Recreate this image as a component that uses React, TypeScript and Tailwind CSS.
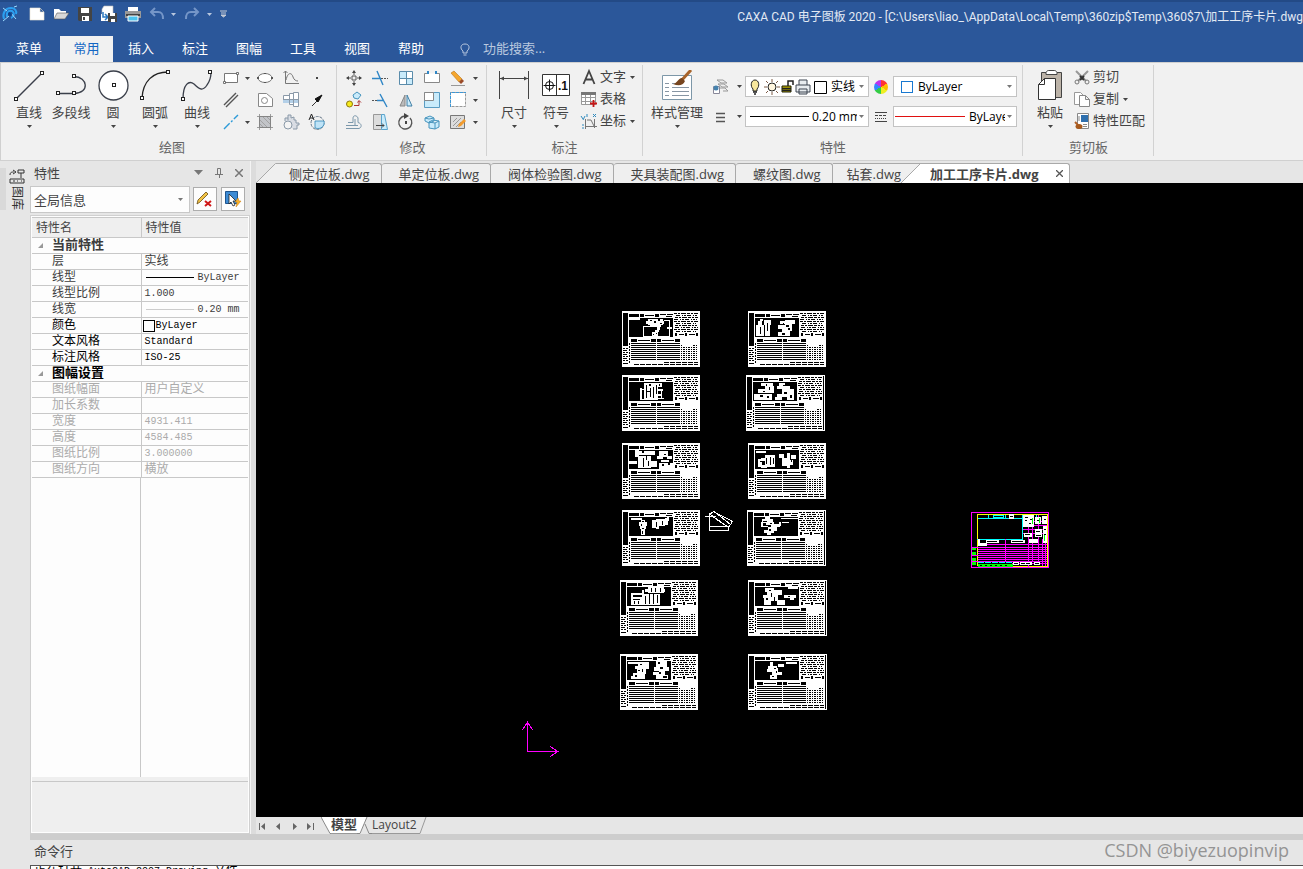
import React from 'react';

interface IconProps {
    size?: number;
    children: React.ReactNode;
}

const Icon: React.FC<IconProps> = ({ size = 18, children }) => (
    <svg width={size} height={size} viewBox={`0 0 ${size} ${size}`} fill="none" stroke="#444" className="shrink-0" aria-hidden="true">
        {children}
    </svg>
);

const Caret: React.FC<{ className?: string }> = ({ className = 'text-[#444]' }) => (
    <svg width="5" height="3" viewBox="0 0 5 3" className={`shrink-0 ${className}`} aria-hidden="true">
        <path d="M0 0h5L2.500 3z" fill="currentColor" />
    </svg>
);

const menuTabs = ['插入', '标注', '图幅', '工具', '视图', '帮助'];
const docTabs = ['单定位板.dwg', '阀体检验图.dwg', '夹具装配图.dwg', '螺纹图.dwg'];

const quickIcons: { label: string; icon: React.ReactNode }[] = [
    { label: '新建', icon: <path d="M2 3h10l4 4v8H2z M12 3v4h4" fill="#fff" stroke="#e8e0d0" strokeWidth=".6" /> },
    { label: '打开', icon: <><path d="M2 14V4h5l2 2h5v3" fill="#fff" stroke="none" /><path d="M2 14l3-6h12l-4 6z" fill="#d8d8d8" stroke="#555" strokeWidth=".6" /></> },
    { label: '保存', icon: <><path d="M2 2h14v14H3l-1-1z" fill="#444" stroke="none" /><path d="M5 3h8v5H5zM6 11h7v5H6z" fill="#fff" stroke="none" /><path d="M8 12v3" stroke="#444" strokeWidth="2" /></> },
    { label: '另存为', icon: <><path d="M4 1h9v9H2V4z" fill="#fff" stroke="#bbb" strokeWidth=".6" /><path d="M1 9v7h8v-6" fill="#fff" stroke="none" /><path d="M3 7v5h4M5 9l3 3-3 3" stroke="#2b78c0" strokeWidth="1.500" /><path d="M8 8h9v9H8z" fill="#444" stroke="none" /><path d="M10 8h5v3h-5zM11 14h4v3h-4z" fill="#fff" stroke="none" /></> },
    { label: '打印', icon: <><path d="M4 2h10v5H4z" fill="#fff" stroke="none" /><path d="M1 6h16v7H1z" fill="#999" stroke="none" /><path d="M2 10h14" stroke="#444" strokeWidth="2" /><path d="M4 11h10v5H4z" fill="#4cc3ee" stroke="#fff" /></> },
];

const undoIcon = <path d="M7 3L3 7l4 4M3 7h7c4 0 5 2 5 7" stroke="#7596c8" strokeWidth="2" />;
const redoIcon = <path d="M11 3l4 4-4 4M15 7H8c-4 0-5 2-5 7" stroke="#7596c8" strokeWidth="2" />;

const node = (x: number, y: number) => <rect x={x - 1.5} y={y - 1.5} width="3" height="3" fill="#fff" stroke="#222" />;

const drawTools: { label: string; caret: boolean; icon: React.ReactNode }[] = [
    { label: '直线', caret: true, icon: <><path d="M3.500 28.500l26-26" stroke="#3a3f4a" strokeWidth="1.500" />{node(3, 29)}{node(29, 3)}</> },
    { label: '多段线', caret: false, icon: <><path d="M3 23.500h16c16 0 14-17 0-17" stroke="#3a3f4a" strokeWidth="1.300" />{node(3, 23)}{node(19, 23)}{node(19, 6)}</> },
    { label: '圆', caret: true, icon: <><circle cx="16.500" cy="15.500" r="14.500" fill="#fff" stroke="#3a3f4a" strokeWidth="1.300" />{node(17, 15)}</> },
    { label: '圆弧', caret: true, icon: <><path d="M3 28C4 11 14 2 29 2" stroke="#222" strokeWidth="1.300" />{node(3, 28)}{node(29, 2)}</> },
    { label: '曲线', caret: true, icon: <><path d="M2 29C2 14 8 10 13 14c6 6 9 7 13 1 3-4 4-7 4-13" stroke="#3a3f4a" strokeWidth="1.300" />{node(2, 29)}{node(29, 2)}</> },
];

const drawGrid: { label: string; caret?: boolean; icon: React.ReactNode }[] = [
    { label: '矩形', caret: true, icon: <><path d="M2.500 4.500h13v9h-13z" fill="#fff" stroke="#777" /><path d="M1.500 12.500h2v2h-2zM14.500 3.500h2v2h-2z" fill="#fff" stroke="#555" strokeWidth=".8" /></> },
    { label: '椭圆', icon: <><ellipse cx="9" cy="9" rx="7" ry="4.500" fill="#fff" stroke="#777" /><path d="M1 8h2v2H1zM15 8h2v2h-2zM8 4h2v1H8zM8 13h2v1H8z" fill="#555" stroke="none" /></> },
    { label: '公式曲线', icon: <path d="M3.500 2v12.500H17M1.500 4l2-2 2 2M4 11c2-9 6-7 7-3 1 3 3 4 5 4" stroke="#777" /> },
    { label: '点', icon: <path d="M8 8h2v2H8z" fill="#444" stroke="none" /> },
    { label: '平行线', icon: <path d="M2 14L14 2M4 16L16 4" stroke="#555" strokeWidth="1.400" /> },
    { label: '局部放大', icon: <><path d="M2.500 2.500h8l6 5v8h-14z" fill="#fff" stroke="#888" /><circle cx="8.500" cy="9.500" r="3" stroke="#888" /></> },
    { label: '轴', icon: <><path d="M1.500 4.500h6v-2h4v-1h5v14h-5v-2h-4v-2h-6z" fill="#fff" stroke="#8a99a8" /><path d="M1 8h15v4H1z" fill="#b4d0e8" stroke="none" /><path d="M1 8.500h15M7.500 3v10M11.500 2v13" stroke="#8a99a8" /></> },
    { label: '箭头', icon: <><path d="M4 15l6-6" stroke="#333" /><path d="M14 4L7 8l3 3z" fill="#111" stroke="#111" /></> },
    { label: '中心线', caret: true, icon: <path d="M2 16L16 2" stroke="#2d9bd8" strokeWidth="1.400" strokeDasharray="8 2 2 2" /> },
    { label: '填充', icon: <><path d="M3.500 3.500h11v11h-11z" fill="#c2c4c8" stroke="#777" /><path d="M4 7l7 7M4 11l3 3M7 4l7 7M11 4l3 3" stroke="#999" strokeWidth=".8" /><path d="M1 3.500h16M1 14.500h16M3.500 1v16M14.500 1v16" stroke="#888" strokeWidth=".8" /></> },
    { label: '齿轮', icon: <><path d="M3 8V5h3V2h3v3l3-1v3h2v3h3v2h-2v4h-4M6 5v2" stroke="#8a99a8" fill="#d9dde4" /><circle cx="6" cy="12" r="4" fill="#f4f4f4" stroke="#8a99a8" /></> },
    { label: '块属性', icon: <><circle cx="9.500" cy="10" r="6.500" stroke="#678" strokeDasharray="3 1" /><path d="M7 8h9c1 5-3 9-9 7z" fill="#bfe3f7" stroke="#2d86b8" strokeWidth=".8" /><path d="M1 7l2.500-6L6 7M2 5h3" stroke="#222" /></> },
];

const editGrid: { label: string; icon: React.ReactNode }[] = [
    { label: '平移', icon: <><path d="M9 2v14M2 9h14" stroke="#555" strokeDasharray="4 1" /><path d="M7 4l2-3 2 3zM7 14l2 3 2-3zM4 7L1 9l3 2zM14 7l3 2-3 2z" fill="#444" stroke="none" /><path d="M7 7h4v4H7z" fill="#eee" stroke="#555" /></> },
    { label: '裁剪', icon: <><path d="M10 9.500h7" stroke="#555" strokeDasharray="2 1" /><path d="M1 9.500h9M6 2l6 14" stroke="#2f86c6" strokeWidth="1.400" /></> },
    { label: '阵列', icon: <><path d="M2.500 2.500h13v13h-13z" fill="#c9ebfb" stroke="#5a8cab" /><path d="M9 3h6v6H9zM3 10h6v5H3z" fill="#fff" stroke="none" /><path d="M9.500 2v14M2 9.500h14" stroke="#5a8cab" /></> },
    { label: '打断', icon: <><path d="M5 4.500H1.500v9h15v-9H14" fill="#fff" stroke="#888" /><path d="M4 2h2v3H4zM12 2h2v3h-2z" fill="#2f86c6" stroke="none" /></> },
    { label: '删除', icon: <><path d="M2 4l3-2 8 8-3 3z" fill="#f5a62d" stroke="#b8741a" strokeWidth=".6" /><path d="M10 13l3-3 2 2-3 3z" fill="#9b4a28" stroke="none" /><path d="M2 16.500h14" stroke="#999" /></> },
    { label: '复制', icon: <><path d="M8 4l4-3 4 3-3 4-4-1z" fill="#c9ebfb" stroke="#4794bd" /><circle cx="4.500" cy="13" r="3" fill="#f6ea1c" stroke="#8c780e" /><path d="M9 14.500h5V10M12.500 11.500l1.500-2 2 2" stroke="#a33" /></> },
    { label: '延伸', icon: <><path d="M1 9.500h5" stroke="#555" strokeDasharray="2 1" /><path d="M9 3l7 13M6 9.500h7" stroke="#2f86c6" strokeWidth="1.400" /></> },
    { label: '镜像', icon: <><path d="M8 4v11H3z" fill="#bbb" stroke="#888" /><path d="M10 4v11h5z" fill="#c9ebfb" stroke="#417fa5" /></> },
    { label: '缩放', icon: <><path d="M1.500 1.500h15v15h-15z" fill="#c9ebfb" stroke="#5a9cc2" /><path d="M1.500 1.500h9v8h-9z" fill="#fff" stroke="#888" /></> },
    { label: '拉伸', icon: <><path d="M1.500 1.500h15v14h-15z" fill="#fff" stroke="#999" strokeDasharray="3 1" /><path d="M1.500 16V1.500H17" stroke="#3c97d6" strokeDasharray="3 1" /></> },
    { label: '等距线', icon: <path d="M1 15.500h13c3-1 3-5-1-6V5c-1-3-5-3-5 0v4.500H3M1 12.500h9V6M5 12.500h8" stroke="#7c98ab" /> },
    { label: '倒角', icon: <><path d="M2.500 1.500h8v15h-8z" fill="#ddd" stroke="#999" /><path d="M10.500 1.500h3l3 15h-6z" fill="#c9ebfb" stroke="#5aa4cd" /><path d="M5 12.500h8M11 10.500l2 2-2 2" stroke="#444" /></> },
    { label: '旋转', icon: <><path d="M8 3a6.500 6.500 0 1 0 5 2" stroke="#555" strokeWidth="1.400" /><path d="M7 0l5 3-5 3z" fill="#444" stroke="none" /><path d="M8 8h2v3H8z" fill="#444" stroke="none" /></> },
    { label: '分解', icon: <path d="M2 5l5-2 4 2v3l-5 2-4-2zM6 9l4-2 6 1v6l-4 2-6-1zM6 9l6 1 4-2M12 10v6M2 5l4 1 5-1" fill="#c9ebfb" stroke="#4794bd" /> },
    { label: '填充编辑', icon: <><path d="M1.500 2.500h14v13h-14z" fill="#ddd" stroke="#777" /><path d="M4 9l4-4M4 13l8-8M7 14l5-5" stroke="#999" /><path d="M9 14l1-3 5-5 2 2-5 5z" fill="#f29b2d" stroke="none" /></> },
];

const RibbonGroup: React.FC<{ label: string; className: string; children: React.ReactNode }> = ({ label, className, children }) => (
    <section aria-label={label} className={`mt-0.5 mb-1 shrink-0 flex flex-col border-r border-[#d2d2d2] ${className}`}>
        <div className="flex h-[72px]">{children}</div>
        <h2 className="text-center text-[13px] leading-[18px] text-[#666] mt-0.5">{label}</h2>
    </section>
);

const BigButton: React.FC<{ label: string; caret?: boolean; wide?: boolean; children: React.ReactNode }> = ({ label, caret = true, wide, children }) => (
    <button type="button" className={`flex flex-col items-center pt-[5px] shrink-0 ${wide ? 'w-[60px]' : 'w-[42px]'}`}>
        <Icon size={32}>{children}</Icon>
        <span className="text-[13px] leading-5 whitespace-nowrap">{label}</span>
        {caret && <Caret className="text-[#444] mt-[3px]" />}
    </button>
);

const TextButton: React.FC<{ label: string; caret?: boolean; children: React.ReactNode }> = ({ label, caret, children }) => (
    <button type="button" className="h-[22px] flex items-center text-[13px] whitespace-nowrap">
        <Icon>{children}</Icon>
        <span className="ml-0.5 mr-1">{label}</span>
        {caret && <Caret />}
    </button>
);

const Combo: React.FC<{ label: string; value: string; children: React.ReactNode }> = ({ label, value, children }) => (
    <div className="w-[124px] h-[21px] flex items-center bg-white border border-[#c3c3c3] pl-[3px] pr-1 text-black">
        {children}
        <select aria-label={label} className="appearance-none flex-1 min-w-0 h-4 leading-4 text-xs bg-transparent outline-none overflow-hidden">
            <option>{value}</option>
        </select>
        <Caret className="text-[#777] ml-0.5" />
    </div>
);

const DrawingTab: React.FC<{ label: string }> = ({ label }) => (
    <button type="button" className="h-5 border-t border-r border-[#a9a9a9] rounded-t-[3px] bg-[#efefef] pl-[17px] pr-[11px] whitespace-nowrap">
        {label}
    </button>
);

interface Property {
    name: string;
    value?: string;
    tone?: 'normal' | 'active' | 'disabled';
    group?: boolean;
    swatch?: React.ReactNode;
}

const properties: Property[] = [
    { name: '当前特性', group: true },
    { name: '层', value: '实线' },
    { name: '线型', value: 'ByLayer', swatch: <span className="w-12 border-t border-black ml-px mr-1" /> },
    { name: '线型比例', value: '1.000' },
    { name: '线宽', value: '0.20 mm', swatch: <span className="w-12 border-t border-[#ccc] ml-px mr-1" /> },
    { name: '颜色', value: 'ByLayer', tone: 'active', swatch: <span className="size-3 border border-black -ml-0.5 mr-px" /> },
    { name: '文本风格', value: 'Standard', tone: 'active' },
    { name: '标注风格', value: 'ISO-25', tone: 'active' },
    { name: '图幅设置', group: true, tone: 'active' },
    { name: '图纸幅面', value: '用户自定义', tone: 'disabled' },
    { name: '加长系数', value: '', tone: 'disabled' },
    { name: '宽度', value: '4931.411', tone: 'disabled' },
    { name: '高度', value: '4584.485', tone: 'disabled' },
    { name: '图纸比例', value: '3.000000', tone: 'disabled' },
    { name: '图纸方向', value: '横放', tone: 'disabled' },
];

const toneClass = {
    normal: 'text-[#3c3c3c]',
    active: 'text-black',
    disabled: 'text-[#ababab]',
};

// Part outlines inside each process card, in card units
const cards: { x: number; y: number; white: string; black?: string; edge?: boolean }[] = [
    { x: 366, y: 128, white: 'M7 7h11v2H7zM26 8h15v6H26zM24 10h18v3H24zM28 14h11v2H28zM21 15h1v11h-1zM21 15h13v1H21zM47 9h1v17h-1zM42 9h5v1h-5zM45 16h5v2h-5zM21 25h27v1H21zM35 16h3v3h-3zM33 19h4v2h-4zM30 21h6v4h-6z', black: 'M28 9h2v1h-2zM32 10h2v2h-2zM36 8h2v2h-2zM38 12h2v1h-2zM31 23h1v1h-1zM34 22h1v1h-1z' },
    { x: 492, y: 128, white: 'M12 8h3v2h-3zM10 10h4v15h-4zM8 14h8v11H8zM16 9h7v5h-7zM17 11h5v14h-5zM37 9h10v4H37zM32 10h5v3h-5zM30 14h8v4h-8zM37 12h7v8h-7zM34 18h8v3h-8zM30 21h12v4H30z', black: 'M12 16h1v7h-1zM16 16h1v5h-1zM19 12h1v8h-1zM35 12h1v2h-1zM38 14h3v2h-3zM40 17h2v2h-2zM34 22h3v2h-3z' },
    { x: 366, y: 192, white: 'M22 8h18v4H22zM22 12h14v13H22zM18 13h2v12h-2zM20 14h3v1h-3zM20 24h10v1H20zM36 14h5v2h-5zM35 19h5v2h-5zM39 15h1v8h-1zM31 23h11v1H31z', black: 'M24 10h1v13h-1zM27 9h2v2h-2zM28 13h1v9h-1zM31 12h1v11h-1zM34 10h1v9h-1zM25 16h3v1h-3zM37 9h1v2h-1z' },
    { x: 490, y: 192, edge: true, white: 'M15 8h12v3H15zM19 11h9v3h-9zM12 14h16v4H12zM8 19h18v6H8zM33 8h6v4h-6zM31 11h13v3H31zM36 14h12v5H36zM31 19h10v3H31zM29 22h7v3h-7zM41 18h7v7h-7z', black: 'M17 16h2v1h-2zM20 9h1v2h-1zM23 12h1v3h-1zM14 20h3v2h-3zM21 21h2v2h-2zM37 10h2v1h-2zM38 17h3v2h-3zM44 20h2v3h-2z' },
    { x: 366, y: 260, white: 'M13 7h4v7h-4zM17 8h16v4H17zM16 13h13v12H16zM29 18h6v6h-6zM7 18h8v3H7zM37 8h9v6H37zM35 13h15v3H35zM39 17h8v2h-8zM37 20h14v6H37z', black: 'M20 8h2v2h-2zM21 15h1v9h-1zM24 13h1v4h-1zM26 18h1v5h-1zM41 14h4v2h-4zM42 11h2v1h-2zM40 21h2v2h-2zM46 20h2v2h-2z' },
    { x: 492, y: 260, white: 'M8 8h10v2H8zM17 12h10v12H17zM10 16h4v8h-4zM13 15h5v3h-5zM13 22h6v3h-6zM31 11h5v4h-5zM34 15h5v8h-5zM39 10h3v15h-3zM43 12h5v4h-5zM41 17h4v5h-4z', black: 'M12 18h3v1h-3zM18 15h1v6h-1zM22 14h1v8h-1zM25 15h1v6h-1zM37 12h2v3h-2zM43 17h1v2h-1z' },
    { x: 366, y: 327, white: 'M9 8h11v2H9zM19 10h4v2h-4zM17 12h8v4h-8zM18 16h6v3h-6zM19 19h4v6h-4zM30 10h4v8h-4zM34 9h3v10h-3zM37 9h6v7h-6zM43 8h3v7h-3zM45 7h2v4h-2z', black: 'M20 11h2v1h-2zM19 14h1v2h-1zM20 18h2v1h-2zM20 21h1v3h-1zM34 12h1v5h-1zM40 11h1v4h-1z' },
    { x: 491, y: 327, edge: true, white: 'M18 7h5v3h-5zM15 9h11v4H15zM14 12h2v4h-2zM19 12h8v3h-8zM24 14h9v3h-9zM21 17h9v4h-9zM14 16h7v1h-7zM17 20h10v3H17zM20 23h4v2h-4zM35 12h7v1h-7zM34 8h17v1H34zM32 12h2v4h-2z', black: 'M16 11h4v1h-4zM23 13h2v1h-2zM22 19h2v2h-2z' },
    { x: 364, y: 397, white: 'M28 7h16v6H28zM25 9h20v3H25zM11 13h12v12H11zM23 14h17v11H23zM12 17h15v4H12zM22 10h2v15h-2z', black: 'M31 8h1v4h-1zM35 8h1v4h-1zM40 8h1v4h-1zM13 15h9v2h-9zM13 19h7v1h-7zM14 21h1v3h-1zM18 21h1v3h-1zM25 16h1v8h-1zM29 14h1v10h-1zM33 14h1v10h-1zM37 15h1v8h-1z' },
    { x: 492, y: 397, edge: true, white: 'M17 8h9v4h-9zM24 10h10v5H24zM19 12h11v9H19zM16 16h7v9h-7zM15 15h4v3h-4zM29 20h8v5h-8zM36 15h12v3H36zM40 7h10v2H40zM42 18h4v2h-4z', black: 'M21 10h2v1h-2zM23 13h1v4h-1zM26 17h1v4h-1zM18 18h2v2h-2zM40 16h2v1h-2z' },
    { x: 364, y: 471, white: 'M8 8h10v2H8zM18 8h11v5H18zM15 12h14v3H15zM17 15h9v5h-9zM13 19h8v6h-8zM11 22h9v3h-9zM20 20h5v5h-5zM36 7h11v6H36zM34 13h11v4H34zM39 16h6v7h-6zM33 18h9v3h-9zM36 21h12v4H36zM44 13h5v4h-5z', black: 'M20 10h2v1h-2zM18 16h2v1h-2zM22 15h1v3h-1zM15 21h2v2h-2zM38 8h2v2h-2zM40 13h3v2h-3zM39 18h2v2h-2zM43 22h4v2h-4z' },
    { x: 492, y: 471, edge: true, white: 'M22 8h3v5h-3zM20 12h9v3h-9zM19 15h7v3h-7zM24 14h6v7h-6zM26 18h8v3h-8zM22 21h7v4h-7zM30 10h6v3h-6zM38 8h11v2H38z', black: 'M26 14h2v1h-2zM24 22h2v1h-2zM28 17h1v2h-1z' },
];

const ProcessCard: React.FC<(typeof cards)[number]> = ({ x, y, white, black, edge }) => (
    <g transform={`translate(${x} ${y})`}>
        <rect width={edge ? 79 : 78} height="56" fill="#fff" />
        <path d="M1 2h5v33H1zM7 3h10v3H7zM18 3h4v3h-4zM33 3h4v3h-4zM23 4h9v1h-9zM7 7h44v19H7zM9 28h6v3H9zM29 28h5v3h-5zM35 28h4v3h-4zM53 28h5v3h-5zM16 29h12v1H16zM40 29h12v1H40zM53 22h2v3h-2zM57 23h5v1h-5zM63 22h2v3h-2zM67 23h6v1h-6zM74 22h2v3h-2z" />
        {edge && <path d="M77 1h1v54h-1z" />}
        <path d={white} fill="#fff" />
        {black && <path d={black} />}
        <g stroke="#000" strokeWidth="1">
            <path d="M38 3.500h13M44 5.500h7" strokeDasharray="6 1" />
            <path d="M52 2.500h24M53 6.500h23M52 10.500h24M53 14.500h22M52 18.500h24" strokeDasharray="3 1 2 1 5 1" />
            <path d="M54 4.500h21M52 8.500h23M54 12.500h20M53 16.500h23M54 20.500h20" strokeDasharray="4 2 1 1 2 1" />
            <path d="M9 32.500h25M35 32.500h23M9 34.500h49M9 36.500h49M9 38.500h49M9 40.500h49M9 42.500h49M9 44.500h49M9 46.500h49M9 48.500h49" />
            <path d="M59 34.500h17M59 36.500h17M59 38.500h17M59 40.500h17M59 42.500h17M59 44.500h17M59 46.500h17M59 48.500h17" strokeDasharray="1 1 2 1" />
            <path d="M1 37.500h5M1 41.500h5M1 45.500h5M1 49.500h5M7.500 32v20" strokeDasharray="2 1" />
            <path d="M1 39.500h4M1 43.500h4M1 47.500h4M1 52.500h5M42 51.500h34M12 53.500h64" strokeDasharray="5 1" />
        </g>
        <path d="M34 32h1v19h-1zM60 28h10v7H60z" fill="#fff" />
    </g>
);

const DrawingCanvas: React.FC = () => (
    <svg className="block flex-1 min-h-0 w-full bg-black" shapeRendering="crispEdges" role="img" aria-label="加工工序卡片">
        {cards.map(card => <ProcessCard key={`${card.x}-${card.y}`} {...card} />)}
        <path d="M448.500 333.500h11M453.500 329.500v18h19v-4h-19M453.500 331.500l4-3 19 10-4 6-18-13M456.500 333.500l16 11M459.500 329.500l15 12" fill="none" stroke="#fff" />
        <g transform="translate(715 329)" fill="none">
            <path d="M6.500 54V2.500h70V54.500h-70" stroke="#ff0" />
            <path d="M7 6.500h45M51.500 3v25M6 27.500h46M17.500 3v3M34.500 3v3M65.500 3v4" stroke="#0ff" />
            <path d="M22.500 3.500h10v2h-10z" stroke="#0ff" />
            <path d="M7 32.500h69M1 35.500h75M7 37.500h69M7 39.500h69M7 41.500h69M1 43.500h75M7 45.500h69M7 47.500h69M1 49.500h75M34.500 27v23M52 9.500h24M52 13.500h24M52 17.500h24M52 21.500h24M57.500 3v52M61.500 3v47M67.500 3v47M71.500 27v27M74.500 27v27M41 51.500h35" stroke="#f0f" />
            <path d="M38 2h5v5h-5zM52 3h11v12H52zM64 5h6v7h-6zM71 4h5v8h-5zM7 27h2v7H7zM9 31h7v3H9zM15 28h13v3H15zM40 28h14v3H40zM58 27h9v4h-9zM53 21h8v4h-8zM64 17h7v8h-7zM72 14h4v17h-4zM42 50h6v3h-6zM49 50h12v3H49zM63 50h6v3h-6z" fill="#fff" />
            <path d="M54 5h3v1h-3zM54 8h2v1h-2zM59 7h3v1h-3zM58 11h2v1h-2zM39 4h3v1h-3zM16 29h10v1H16zM41 29h11v1H41zM54 22h5v1h-5zM65 19h4v1h-4zM65 23h5v1h-5zM73 7h2v1h-2zM66 8h3v1h-3zM73 17h2v1h-2zM73 22h2v1h-2zM43 51h4v1h-4zM50 51h4v1h-4zM55 51h4v1h-4zM64 51h4v1h-4z" fill="#000" />
            <path d="M1 36h4v2H1zM1 40h4v3H1zM1 46h4v3H1zM1 50h4v3H1zM7 52h35v3H7z" fill="#0f0" />
            <path d="M61.500 6v6M68.500 6v5M73.500 23v6" stroke="#0f0" />
            <path d="M9 53.500h30" stroke="#000" strokeDasharray="2 3" />
            <path d="M7 50.500h35" stroke="#0ff" strokeDasharray="6 1" />
            <path d="M.5.5h77v55H.5z" stroke="#f0f" />
        </g>
        <path d="M271.500 539v29.500h30M266.500 547l5-8 5 8M294 563.500l8 5-8 5" fill="none" stroke="#f0f" />
    </svg>
);

const PropertyPanel: React.FC = () => (
    <aside className="w-[220px] shrink-0 flex flex-col text-[#444]">
        <div className="h-[25px] flex items-center pl-1 pr-[7px] pb-0.5 gap-3">
            <h2 className="flex-1 text-[13px] leading-5">特性</h2>
            <button type="button" aria-label="菜单"><svg width="9" height="5"><path d="M0 0h9L4.500 5z" fill="#777" /></svg></button>
            <button type="button" aria-label="固定"><svg width="8" height="10" fill="none" stroke="#777"><path d="M2.500 6V.5h3V6M0 6.500h8M4.500 7v3" /></svg></button>
            <button type="button" aria-label="关闭"><svg width="8" height="8" fill="none" stroke="#777" strokeWidth="1.500"><path d="M0 0l8 8M8 0L0 8" /></svg></button>
        </div>
        <div className="flex gap-[3px] h-[27px]">
            <div className="w-[160px] flex items-center bg-[#fdfdfd] border border-[#c8c8c8] pl-[3px] pr-1.5">
                <select aria-label="选择对象" className="appearance-none flex-1 min-w-0 text-[13px] leading-5 outline-none">
                    <option>全局信息</option>
                </select>
                <Caret className="text-[#777]" />
            </div>
            <button type="button" aria-label="取消选择" className="size-6 mt-px grid place-items-center bg-[#fdfdfd] border border-[#adadad]">
                <Icon><path d="M1 14l1-4 8-8 2 2-8 8z" fill="#f3c444" stroke="#664a13" strokeWidth=".8" /><path d="M9 11l6 5M15 11l-6 5" stroke="#d01818" strokeWidth="2" /></Icon>
            </button>
            <button type="button" aria-label="快速选择" className="size-6 mt-px ml-px grid place-items-center bg-[#fdfdfd] border border-[#adadad]">
                <Icon><path d="M1.500 1.500h12v12h-12z" fill="#3d8bd4" stroke="#1e558f" /><path d="M5 4v10l2-2 2 4 2-1-2-4h3z" fill="#fff" stroke="#222" strokeWidth=".8" /><path d="M14 8l-3 4h2l-1 5 5-6h-2z" fill="#f8b12b" stroke="#cc7d0c" strokeWidth=".5" /></Icon>
            </button>
        </div>
        <div className="mt-0.5 flex-1 min-h-0 flex flex-col border border-[#d0d0d0] bg-[#fdfdfd] p-px font-['Liberation_Mono','Noto_Sans_CJK_SC',monospace]">
            <table className="w-full table-fixed border-collapse text-xs">
                <thead>
                    <tr className="h-5 bg-[#efefef] border-y border-[#c8c8c8] text-left">
                        <th className="w-[109px] p-0 pt-0.5 pl-1 font-normal leading-4 border-r border-[#c8c8c8]">特性名</th>
                        <th className="p-0 pt-0.5 pl-1 font-normal leading-4">特性值</th>
                    </tr>
                </thead>
                <tbody>
                    {properties.map(({ name, value, tone = 'normal', group, swatch }) => (
                        <tr key={name} className={`h-4 border-b border-[#c8c8c8] ${toneClass[tone]}`}>
                            {group ? (
                                <th colSpan={2} scope="rowgroup" className="p-0 text-left text-[13px] leading-[15px] font-bold">
                                    <span className="flex items-center">
                                        <svg width="20" height="9" aria-hidden="true"><path d="M11 2v5H6z" fill="#999" /></svg>{name}
                                    </span>
                                </th>
                            ) : (
                                <>
                                    <th scope="row" className="p-0 pl-5 text-left font-normal border-r border-[#c8c8c8]">
                                        <span className="flex items-center h-[15px] pt-0.5"><span className="leading-[13px]">{name}</span></span>
                                    </th>
                                    <td className="p-0 pl-[3px] leading-[15px]">
                                        <span className="flex items-center h-[15px] whitespace-pre">
                                            {swatch}
                                            <span className={/^[\x20-\x7e]+$/.test(value || '') ? 'text-[10px]' : 'text-xs'}>{value}</span>
                                        </span>
                                    </td>
                                </>
                            )}
                        </tr>
                    ))}
                </tbody>
            </table>
            <div className="flex-1 w-[109px] border-r border-[#c8c8c8]" />
            <div className="h-[55px] bg-[#efefef] pt-1">
                <div className="border-t border-[#c8c8c8]" />
            </div>
        </div>
    </aside>
);

const Ribbon: React.FC = () => (
    <div className="h-[99px] flex shrink-0 bg-[#f1f1f1] border-y border-l border-[#d0d0d0] text-[#444]">
        <RibbonGroup label="绘图" className="w-[336px] pl-[7px]">
            {drawTools.map(tool => (
                <BigButton key={tool.label} label={tool.label} caret={tool.caret}>{tool.icon}</BigButton>
            ))}
            <div className="grid grid-cols-[34px_26px_26px_26px] auto-rows-[22px] pt-0.5">
                {drawGrid.map(tool => (
                    <button key={tool.label} type="button" aria-label={tool.label} className="flex items-center gap-[5px] px-1">
                        <Icon>{tool.icon}</Icon>
                        {tool.caret && <Caret />}
                    </button>
                ))}
            </div>
        </RibbonGroup>
        <RibbonGroup label="修改" className="w-[150px] pl-1 pr-0.5">
            <div className="grid grid-cols-5 w-[130px] auto-rows-[22px] pt-0.5">
                {editGrid.map(tool => (
                    <button key={tool.label} type="button" aria-label={tool.label} className="grid place-items-center">
                        <Icon>{tool.icon}</Icon>
                    </button>
                ))}
            </div>
            <div className="grid auto-rows-[22px] pt-0.5">
                {['删除', '拉伸', '填充编辑'].map(name => (
                    <button key={name} type="button" aria-label={`${name}选项`} className="grid place-items-center w-2">
                        <Caret />
                    </button>
                ))}
            </div>
        </RibbonGroup>
        <RibbonGroup label="标注" className="w-[156px] px-1.5">
            <BigButton label="尺寸"><path d="M1.500 1v28M30.500 1v28M2 8.500h28" stroke="#444" /><path d="M2 8.500l4-2v4zM30 8.500l-4-2v4z" fill="#444" stroke="none" /></BigButton>
            <BigButton label="符号">
                <path d="M2.500 4.500h27v21h-27zM16.500 4v21" fill="#fff" stroke="#333" />
                <circle cx="9.500" cy="15.500" r="4" stroke="#111" /><path d="M3.500 15.500h12M9.500 9.500v12" stroke="#111" />
                <text x="18" y="20" fontSize="12" fontWeight="700" fontFamily="Liberation Sans" fill="#111" stroke="none">.1</text>
            </BigButton>
            <div className="flex flex-col pt-px pl-[3px]">
                <TextButton label="文字" caret><path d="M3.500 16L9 3l5.500 13M5.500 11.500h7" stroke="#444" strokeWidth="1.800" /></TextButton>
                <TextButton label="表格"><path d="M1.500 3.500h14v11h-14zM1 7.500h14M1 11.500h14M5.500 4v11M10.500 4v11" fill="#fff" stroke="#999" /><path d="M1 2h15v3H1z" fill="#777" stroke="none" /><path d="M13.500 10v7M10 13.500h7" stroke="#c51616" strokeWidth="1.800" /></TextButton>
                <TextButton label="坐标" caret><path d="M5.500 7v10M5 14.500h12M7 8h4l3 6M14.500 7v9" stroke="#777" /><path d="M1 4l2 3M5 4L3 8M2 13h2M2 16h2M7 2v3M13 2l3 3M16 2l-3 3" stroke="#2e89bd" /></TextButton>
            </div>
        </RibbonGroup>
        <RibbonGroup label="特性" className="w-[380px] pl-1 pr-[3px]">
            <BigButton label="样式管理" wide>
                <path d="M1.500 5.500h29v24h-29z" fill="#fff" stroke="#7d97a8" />
                <path d="M4 13.500h4M11 13.500h9M4 17.500h4M11 17.500h17M4 21.500h4M11 21.500h17M4 25.500h4M11 25.500h17" stroke="#8795a3" />
                <path d="M30 0L20 11" stroke="#a8642b" strokeWidth="3" /><path d="M21 8l3 3c-2 5-7 5-12 3 4 0 5-6 9-6z" fill="#77451e" stroke="none" />
            </BigButton>
            <div className="flex flex-col gap-[9px] pt-[11px] pl-1">
                <button type="button" aria-label="图层" className="h-[21px] flex items-center gap-2"><Icon><path d="M6 2h6l4 3h-6zM7 6h6l4 3h-6zM9 10h5l3 3h-5" fill="#eee" stroke="#999" /><path d="M2.500 8.500h6v7h-6z" fill="#fff" stroke="#889" /><circle cx="5" cy="10" r="2.500" fill="#4682ad" stroke="none" /></Icon><Caret /></button>
                <button type="button" aria-label="线宽" className="h-[21px] flex items-center gap-2"><Icon><path d="M5 5.500h9M5 9.500h9M5 13.500h9" stroke="#555" strokeWidth="1.300" /></Icon><Caret /></button>
            </div>
            <div className="flex flex-col gap-[9px] pt-[11px] pl-[3px]">
                <Combo label="当前图层" value="实线">
                    <svg width="78" height="18" viewBox="0 0 78 18" className="shrink-0 mr-1" fill="none" stroke="#222" aria-hidden="true">
                        <path d="M4 11C1 8 2 2 6 2s5 6 2 9v2H4z" fill="#f7e79c" /><path d="M4 14h4M5 16h2" strokeWidth="1.500" />
                        <circle cx="23" cy="9" r="4" fill="#fff6df" /><path d="M23 1v3M23 14v3M15 9h3M28 9h3M17 3l2 2M29 3l-2 2M17 15l2-2M29 15l-2-2" stroke="#7c5a45" />
                        <path d="M33 8h9v6h-9z" fill="#bfb000" stroke="#1e1e00" /><path d="M33 10.500h9M33 12.500h9M39 8V3h5v4" strokeWidth="1.500" />
                        <path d="M50 7V2h8v5M47 7h14v7H47zM50 11h8v5h-8z" fill="#e8ecef" stroke="#3d4550" />
                        <path d="M65.500 3.500h12v12h-12z" fill="#fff" stroke="#000" />
                    </svg>
                </Combo>
                <Combo label="当前线宽" value="0.20 mm">
                    <span className="w-[59px] shrink-0 border-t border-black ml-px mr-[3px]" />
                </Combo>
            </div>
            <div className="w-6 flex flex-col items-center gap-[9px] pt-[11px]">
                <button type="button" aria-label="颜色" className="h-[21px] flex items-center">
                    <span className="size-[14px] rounded-full bg-[conic-gradient(#f33,#f33_60deg,#fb0_60deg,#fb0_120deg,#ee2_120deg,#ee2_180deg,#3c4_180deg,#3c4_240deg,#38f_240deg,#38f_300deg,#b3e_300deg)]" />
                </button>
                <button type="button" aria-label="线型" className="h-[21px] flex items-center"><Icon size={14}><path d="M1 2.500h12M1 11.500h12" /><path d="M1 5.500h12" strokeDasharray="3 1" /><path d="M1 8.500h12" strokeDasharray="1 1" /></Icon></button>
            </div>
            <div className="flex flex-col gap-[9px] pt-[11px]">
                <Combo label="当前颜色" value="ByLayer">
                    <span className="size-3 shrink-0 border border-[#1878d0] ml-1 mr-[5px]" />
                </Combo>
                <Combo label="当前线型" value="ByLayer">
                    <span className="w-[70px] shrink-0 border-t border-[#e01010] mr-1 -ml-0.5" />
                </Combo>
            </div>
        </RibbonGroup>
        <RibbonGroup label="剪切板" className="w-[131px] pl-1.5 pr-[5px]">
            <BigButton label="粘贴">
                <path d="M7.500 2.500h20v25h-20z" fill="#bcb3a8" stroke="#444" /><path d="M12 2.500c1-2 2-2 3-2h5c1 0 2 0 3 2v2H12z" fill="#fff" stroke="#444" />
                <path d="M4.500 14.500l6-6h11v21h-17zM10.500 8.500v6h-6" fill="#fff" stroke="#333" />
            </BigButton>
            <div className="flex flex-col pt-px pl-0.5">
                <TextButton label="剪切"><path d="M3 3l10 10M15 3L5 13" stroke="#999" strokeWidth="2" /><path d="M7 8l4 4M11 8l-4 4" stroke="#333" strokeWidth="2" /><circle cx="4" cy="14" r="2" stroke="#777" /><circle cx="14" cy="14" r="2" stroke="#777" /></TextButton>
                <TextButton label="复制" caret><path d="M1.500 2.500h6l3 3v9h-9z" fill="#fff" stroke="#999" /><path d="M6.500 5.500h6l4 4v7h-10zM12.500 5.500v4h4" fill="#fff" stroke="#888" /></TextButton>
                <TextButton label="特性匹配"><path d="M4.500 1.500h11v15h-11z" fill="#fff" stroke="#888" /><path d="M8 3h7v7H8z" fill="#2e6fae" stroke="none" /><path d="M10 12.500h4M10 14.500h4M6 4v5" stroke="#888" /><path d="M2 10l3 3" stroke="#b06028" strokeWidth="2" /><ellipse cx="6" cy="14.500" rx="3.500" ry="2.500" fill="#a85a1c" stroke="none" /></TextButton>
            </div>
        </RibbonGroup>
    </div>
);

const App: React.FC = () => (
    <div className="h-screen flex flex-col overflow-hidden bg-[#e6e6e6] font-['Open_Sans','Noto_Sans_CJK_SC',sans-serif] select-none">
        <header className="shrink-0 bg-[#2b579a] text-white">
            <div className="h-9 flex justify-between pt-[3px] border-t-2 border-[#234a86]">
                <div className="h-[18px] flex items-center pl-px">
                    <Icon><path d="M3 14c-2-5 1-11 7-11 4 0 6 3 5 6M6 12c-1-5 2-7 5-6 3 2 2 6-1 7" stroke="#2b9ff0" strokeWidth="2" /><path d="M2 3l4 3M9 7l6 7M2 16l6-5M13 2l3-1" stroke="#9cdcff" /><circle cx="9" cy="9" r="2" fill="#0a3f88" stroke="none" /></Icon>
                    <div className="flex gap-1.5 ml-[9px]">
                        {quickIcons.map(item => (
                            <button key={item.label} type="button" aria-label={item.label}><Icon>{item.icon}</Icon></button>
                        ))}
                        <button type="button" aria-label="撤销"><Icon>{undoIcon}</Icon></button>
                    </div>
                    <Caret className="text-[#b9c8df] ml-[5px] mr-[7px]" />
                    <button type="button" aria-label="恢复"><Icon>{redoIcon}</Icon></button>
                    <Caret className="text-[#b9c8df] ml-1.5 mr-2" />
                    <button type="button" aria-label="自定义快速访问"><svg width="7" height="8" viewBox="0 0 7 8"><path d="M0 1h7M1 3h5M1 5h5L3.500 7z" stroke="#c5cbd5" fill="#c5cbd5" /></svg></button>
                </div>
                <h1 className="text-xs leading-[18px] pt-[3px] text-[#e3eaf4] whitespace-nowrap font-['Roboto','Noto_Sans_CJK_SC',sans-serif]">
                    CAXA CAD 电子图板 2020 - [C:\Users\liao_\AppData\Local\Temp\360zip$Temp\360$7\加工工序卡片.dwg
                </h1>
            </div>
            <nav className="h-[26px] flex text-[13px]">
                <button type="button" className="w-[58px] mr-0.5">菜单</button>
                <button type="button" className="w-[53px] mr-px bg-[#f1f1f1] text-[#1467c4]">常用</button>
                {menuTabs.map(tab => (
                    <button key={tab} type="button" className="w-[54px]">{tab}</button>
                ))}
                <label className="flex items-center pl-[19px]">
                    <svg width="15" height="14" viewBox="0 0 15 14" fill="none" stroke="#b9c8df" aria-hidden="true"><path d="M6 9C3 7 3 2 8 2s5 5 2 7v2H6zM6.500 13h3" /></svg>
                    <input placeholder="功能搜索..." aria-label="功能搜索" className="w-24 ml-[11px] bg-transparent outline-none placeholder:text-[#b9c8df]" />
                </label>
            </nav>
        </header>
        <Ribbon />
        <main className="flex-1 min-h-0 flex">
            <div className="w-[30px] shrink-0 flex items-start pt-[7px]">
                <div className="w-1.5 h-[42px] bg-[#d9d9d9]" />
                <button type="button" className="w-[22px] flex flex-col items-center text-xs leading-[14px] text-[#333]">
                    <Icon><path d="M2 7c0-3 2-3 4-3M5 2l3 2-3 2M10 2h6v3h-6zM13 5v5M2 11h14v4H2zM5 13h2M9 13h1M13 13h1" stroke="#333" /></Icon>
                    <span className="[writing-mode:vertical-rl] [text-orientation:sideways]">图库</span>
                </button>
            </div>
            <PropertyPanel />
            <div className="w-1.5 shrink-0 border-l border-[#f4f4f4] bg-[#dcdcdc]" />
            <section className="flex-1 min-w-0 flex flex-col">
                <div className="h-[22px] shrink-0 flex items-end text-[13px] leading-4 text-[#444]">
                    <svg width="20" height="20" className="shrink-0"><path d="M0 20L20 0v20z" fill="#efefef" /><path d="M0 20L19.500.5H20" stroke="#a9a9a9" fill="none" /></svg>
                    <button type="button" className="h-5 border-t border-r border-[#a9a9a9] rounded-tr-[3px] bg-[#efefef] pl-[13px] pr-[11px] whitespace-nowrap">侧定位板.dwg</button>
                    {docTabs.map(tab => <DrawingTab key={tab} label={tab} />)}
                    <button type="button" className="h-5 border-t border-[#a9a9a9] bg-[#efefef] pl-[14px] whitespace-nowrap">钻套.dwg</button>
                    <svg width="20" height="20" className="shrink-0"><path d="M0 0h20v20H0z" fill="#efefef" /><path d="M0 20L20 0v20z" fill="#fff" /><path d="M0 .5h20M0 20L20 0" stroke="#a9a9a9" fill="none" /></svg>
                    <div className="h-5 flex items-center gap-[17px] border-t border-r border-[#a9a9a9] rounded-tr-[3px] bg-white pl-[9px] pr-1.5">
                        <button type="button" className="font-bold whitespace-nowrap">加工工序卡片.dwg</button>
                        <button type="button" aria-label="关闭图纸"><svg width="7" height="7" stroke="#555" strokeWidth="1.300"><path d="M0 0l7 7M7 0L0 7" /></svg></button>
                    </div>
                </div>
                <DrawingCanvas />
                <div className="h-[17px] shrink-0 flex text-xs leading-4 text-[#444]">
                    <svg width="65" height="17" fill="#666" className="shrink-0" aria-hidden="true"><path d="M3 6h1v7H3zM9 6v7L5 9.500zM24 6v7l-4-3.500zM37 6v7l4-3.500zM51 6v7l4-3.500zM57 6h1v7h-1z" /></svg>
                    <svg width="10" height="17" className="shrink-0"><path d="M0 0h10v17H9z" fill="#fff" /><path d="M0 0l9 16.500h1" stroke="#888" fill="none" /></svg>
                    <button type="button" className="bg-white border-b border-[#999] font-bold text-[13px] leading-[14px] pb-0.5">模型</button>
                    <svg width="15" height="17" className="shrink-0"><path d="M0 0h10L3 17H0z" fill="#fff" /><path d="M10 0L3 16.500H0M8 7l4 9.500h3" stroke="#888" fill="none" /></svg>
                    <button type="button" className="border-b border-[#999]">Layout2</button>
                    <svg width="12" height="17" className="shrink-0"><path d="M9 0L3 16.500H0" stroke="#999" fill="none" /></svg>
                </div>
            </section>
        </main>
        <footer className="h-[35px] shrink-0 relative ml-[30px] flex flex-col border-t-[6px] border-[#cdcdcd] text-[#444]">
            <h2 className="h-[25px] shrink-0 text-[13px] leading-[23px] pl-1">命令行</h2>
            <div className="h-1 shrink-0 overflow-hidden bg-white border-t border-l border-[#555] pl-[3px] whitespace-nowrap text-black font-['Liberation_Mono','Noto_Sans_CJK_SC',monospace]">
                <p className="text-[10px] leading-[10px]"><span className="text-xs leading-[10px]">正在打开</span> AutoCAD 2007 Drawing <span className="text-xs leading-[10px]">文件</span></p>
            </div>
            <span className="absolute right-3.5 top-0 text-lg leading-5 text-[#949494]">CSDN @biyezuopinvip</span>
        </footer>
    </div>
);

export default App;
